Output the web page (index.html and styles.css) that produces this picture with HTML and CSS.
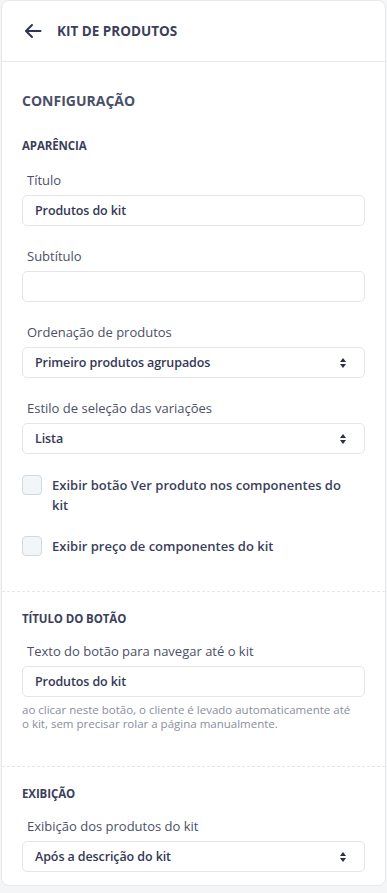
FILE: index.html
```html
<!DOCTYPE html>
<html lang="pt-br">
<head>
    <meta charset="UTF-8">
    <title>Kit de produtos</title>
    <meta name="viewport" content="width=device-width, initial-scale=1.0">
    <link rel="stylesheet" href="styles.css">
</head>
<body>
    <div class="panel">
        <div class="panel-header">
            <button class="back-btn" aria-label="Voltar">
                <svg width="18" height="16" viewBox="0 0 18 16"><path d="M8 2 L2 8 L8 14 M2.5 8 H16.5" fill="none" stroke="#2f3452" stroke-width="2" stroke-linecap="round" stroke-linejoin="round"/></svg>
            </button>
            <span class="panel-title">KIT DE PRODUTOS</span>
        </div>
        <div class="panel-body">
            <h3 class="config-title">CONFIGURAÇÃO</h3>

            <div class="section first">
                <h4 class="section-title">APARÊNCIA</h4>
                <div class="field">
                    <label>Título</label>
                    <div class="input">Produtos do kit</div>
                </div>
                <div class="field">
                    <label>Subtítulo</label>
                    <div class="input"></div>
                </div>
                <div class="field">
                    <label>Ordenação de produtos</label>
                    <div class="input select">Primeiro produtos agrupados<span class="caret"></span></div>
                </div>
                <div class="field">
                    <label>Estilo de seleção das variações</label>
                    <div class="input select">Lista<span class="caret"></span></div>
                </div>
                <div class="check">
                    <span class="box"></span>
                    <span>Exibir botão Ver produto nos componentes do kit</span>
                </div>
                <div class="check">
                    <span class="box"></span>
                    <span>Exibir preço de componentes do kit</span>
                </div>
            </div>

            <div class="section">
                <h4 class="section-title">TÍTULO DO BOTÃO</h4>
                <div class="field">
                    <label>Texto do botão para navegar até o kit</label>
                    <div class="input">Produtos do kit</div>
                    <p class="help">ao clicar neste botão, o cliente é levado automaticamente até o kit, sem precisar rolar a página manualmente.</p>
                </div>
            </div>

            <div class="section last">
                <h4 class="section-title">EXIBIÇÃO</h4>
                <div class="field">
                    <label>Exibição dos produtos do kit</label>
                    <div class="input select">Após a descrição do kit<span class="caret"></span></div>
                </div>
            </div>
        </div>
    </div>
</body>
</html>
```

FILE: styles.css
```css
body {
    margin: 0;
    background: #f4f5f7;
    font-family: 'Open Sans', 'Noto Sans', sans-serif;
    color: #3b3f5c;
    font-size: 13px;
}
.panel {
    margin: 0 1px;
    background: #fff;
    border: 1px solid #e6e9ee;
    border-radius: 8px;
    height: 886px;
    box-sizing: border-box;
}
.panel-header {
    height: 60px;
    display: flex;
    align-items: center;
    gap: 15px;
    padding: 0 0 0 22px;
    border-bottom: 1px solid #e6e9ee;
}
.back-btn {
    background: none; border: 0; padding: 0; cursor: pointer;
    display: flex; align-items: center;
}
.panel-title {
    font-weight: 700;
    font-size: 13.5px;
    line-height: 18px;
    color: #3b3f5c;
}
.config-title {
    margin: 0;
    padding: 30px 20px 0;
    font-size: 14px;
    line-height: 18px;
    font-weight: 700;
    color: #4a4f68;
}
.section {
    padding: 20px 20px 35px;
    border-bottom: 1px dashed #e3e6eb;
}
.section.first { padding-top: 29px; }
.section.last { border-bottom: 0; padding-bottom: 0; }
.section-title {
    margin: 0 0 18px;
    font-size: 11.5px;
    line-height: 14px;
    font-weight: 700;
    color: #3b3f5c;
    letter-spacing: -0.1px;
}
.section + .section .section-title { margin-bottom: 16px; }
.field { margin-bottom: 21px; }
.section .field:last-child { margin-bottom: 0; }
.field label {
    display: block;
    padding-left: 5px;
    margin-bottom: 6px;
    font-size: 13px;
    line-height: 18px;
    color: #4b5068;
}
.input {
    height: 31px;
    box-sizing: border-box;
    border: 1px solid #e2e6ec;
    border-radius: 5px;
    padding: 0 12px;
    display: flex;
    align-items: center;
    font-weight: 600;
    font-size: 12.5px;
    color: #343857;
    letter-spacing: -0.1px;
}
.select { justify-content: space-between; padding-right: 18px; }
.caret {
    width: 0; height: 0;
    position: relative;
    border-left: 3.5px solid transparent;
    border-right: 3.5px solid transparent;
    border-bottom: 4px solid #2b2f44;
    margin-top: -5px;
}
.caret::after {
    content: "";
    position: absolute;
    left: -3.5px; top: 6px;
    border-left: 3.5px solid transparent;
    border-right: 3.5px solid transparent;
    border-top: 4px solid #2b2f44;
}
.check {
    display: flex;
    gap: 10px;
    align-items: flex-start;
    font-weight: 600;
    font-size: 13px;
    line-height: 20px;
    color: #3b3f5c;
    padding-right: 12px;
    margin-bottom: 21px;
}
.check:last-child { margin-bottom: 0; }
.box {
    flex: 0 0 auto;
    width: 20px; height: 20px;
    box-sizing: border-box;
    border: 1.5px solid #d0d9de;
    border-radius: 4px;
    background: #f3f6f9;
}
.help {
    margin: 6px 0 0;
    font-size: 11.5px;
    line-height: 14px;
    color: #8a8ea0;
    padding-right: 10px;
}
```
